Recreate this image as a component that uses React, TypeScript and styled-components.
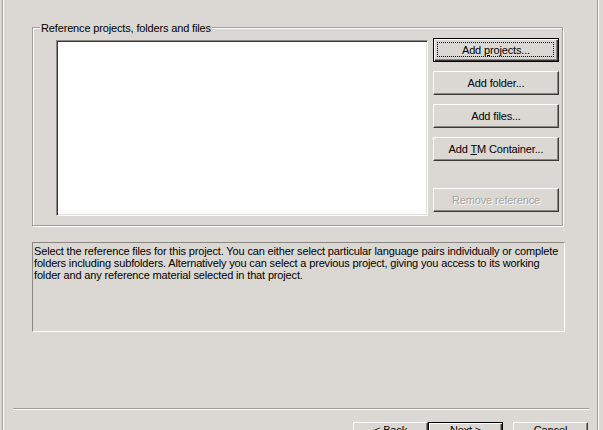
import React from "react";
import styled, { createGlobalStyle, css } from "styled-components";

const FACE = "#dbd8d3";

const Global = createGlobalStyle`
  html, body { margin: 0; padding: 0; background: ${FACE}; }
  body {
    font-family: "Liberation Sans", Arial, sans-serif;
    font-size: 11px;
    letter-spacing: -0.15px;
    color: #000;
  }
`;

const Page = styled.div`
  width: 603px;
  height: 430px;
  overflow: hidden;
  background: ${FACE};
`;

const Frame = styled.div`
  box-sizing: border-box;
  margin-left: 2px;
  width: 597px;
  height: 430px;
  border-left: 1px solid #a19e9a;
  border-right: 1px solid #ffffff;
  box-shadow: inset 1px 0 0 #ffffff, inset -1px 0 0 #a19e9a;
  display: flex;
  flex-direction: column;
  overflow: hidden;
  & > * {
    flex-shrink: 0;
  }
`;

const GroupBox = styled.div`
  position: relative;
  box-sizing: border-box;
  margin: 27px 0 0 29px;
  width: 531px;
  height: 199px;
  border: 1px solid #a19e9a;
  box-shadow: inset 1px 1px 0 #ffffff, 1px 1px 0 #ffffff;
  padding: 10px 2px 0 23px;
  display: flex;
  gap: 5px;
  align-items: flex-start;
`;

const Legend = styled.span`
  position: absolute;
  top: -6px;
  left: 7px;
  padding: 0 1px;
  line-height: 13px;
  background: ${FACE};
  white-space: nowrap;
`;

const ListBox = styled.div`
  box-sizing: border-box;
  margin-top: 2px;
  width: 372px;
  height: 176px;
  background: #ffffff;
  border: 1px solid;
  border-color: #8a8783 #ffffff #ffffff #8a8783;
  box-shadow: inset 1px 1px 0 #3c3a38, inset -1px -1px 0 #e4e1dd;
`;

const ButtonColumn = styled.div`
  display: flex;
  flex-direction: column;
  gap: 9px;
`;

const Button = styled.button<{ $default?: boolean; $focus?: boolean; $gapAbove?: number }>`
  position: relative;
  box-sizing: border-box;
  width: 126px;
  height: 24px;
  margin: ${(p) => (p.$gapAbove ? `${p.$gapAbove}px 0 0` : "0")};
  padding: 0;
  background: ${FACE};
  font-family: "Liberation Sans", Arial, sans-serif;
  font-size: 11px;
  letter-spacing: -0.15px;
  line-height: 13px;
  color: #000;
  border: 1px solid;
  border-color: #ffffff #3c3a38 #3c3a38 #ffffff;
  box-shadow: inset -1px -1px 0 #8a8783;
  display: flex;
  align-items: center;
  justify-content: center;
  ${(p) =>
    p.$default &&
    css`
      border-color: #000;
      box-shadow: inset 1px 1px 0 #ffffff, inset -1px -1px 0 #3c3a38, inset -2px -2px 0 #8a8783;
    `}
  ${(p) =>
    p.$focus &&
    css`
      &::after {
        content: "";
        position: absolute;
        inset: 3px 4px 4px 3px;
        border: 1px dotted #000;
      }
    `}
  &:disabled {
    color: #a5a29d;
    text-shadow: 1px 1px 0 #ffffff;
  }
`;

const Label = styled.span`
  white-space: pre;
`;

const Description = styled.div`
  box-sizing: border-box;
  margin: 16px 0 0 29px;
  width: 533px;
  height: 90px;
  padding: 2px 0 0 1px;
  border: 1px solid;
  border-color: #8a8783 #ffffff #ffffff #8a8783;
  line-height: 12px;
`;

const Line = styled.div`
  white-space: nowrap;
`;

const Separator = styled.div`
  margin: 76px 0 0 10px;
  width: 576px;
  border-top: 1px solid #a19e9a;
  border-bottom: 1px solid #ffffff;
`;

const NavRow = styled.div`
  display: flex;
  justify-content: flex-end;
  padding-right: 10px;
  margin-top: 12px;
`;

const NavButton = styled(Button)`
  width: 75px;
  height: 23px;
  align-items: flex-start;
  padding-top: 1px;
`;

const NavGap = styled.div`
  width: 10px;
`;

export default function App() {
  return (
    <>
      <Global />
      <Page>
        <Frame>
          <GroupBox>
            <Legend>Reference projects, folders and files</Legend>
            <ListBox />
            <ButtonColumn>
              <Button $default $focus>
                <Label>
                  Add <u>p</u>rojects...
                </Label>
              </Button>
              <Button>
                <Label>Add folder...</Label>
              </Button>
              <Button>
                <Label>Add files...</Label>
              </Button>
              <Button>
                <Label>
                  Add <u>T</u>M Container...
                </Label>
              </Button>
              <Button disabled $gapAbove={18}>
                <Label>Remove reference</Label>
              </Button>
            </ButtonColumn>
          </GroupBox>
          <Description>
            <Line>
              Select the reference files for this project. You can either select particular language pairs individually or complete
            </Line>
            <Line>
              folders including subfolders. Alternatively you can select a previous project, giving you access to its working
            </Line>
            <Line>folder and any reference material selected in that project.</Line>
          </Description>
          <Separator />
          <NavRow>
            <NavButton>
              <Label>
                &lt; <u>B</u>ack
              </Label>
            </NavButton>
            <NavButton $default>
              <Label>
                <u>N</u>ext &gt;
              </Label>
            </NavButton>
            <NavGap />
            <NavButton>
              <Label>Cancel</Label>
            </NavButton>
          </NavRow>
        </Frame>
      </Page>
    </>
  );
}
